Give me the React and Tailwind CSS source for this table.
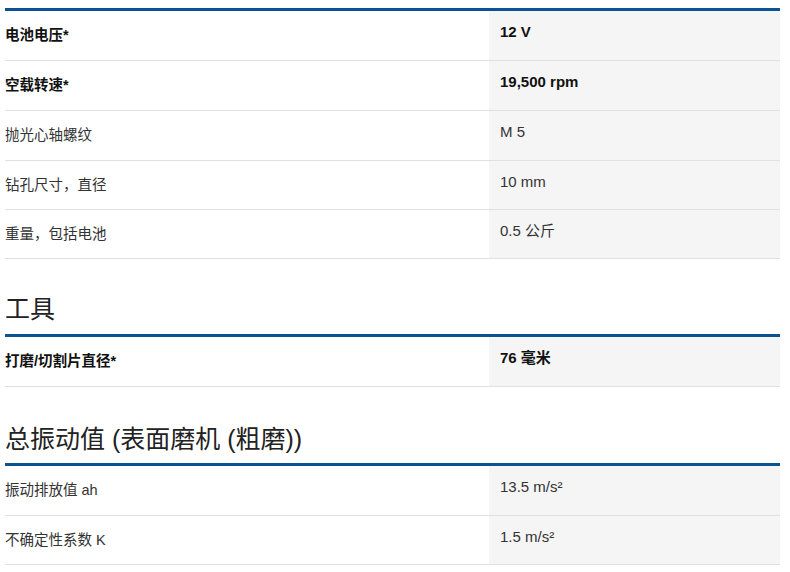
import React from 'react';

const font = { fontFamily: '"Liberation Sans", "Noto Sans CJK SC", sans-serif' };

function Row({ label, value, bold, h }) {
  return (
    <div className={`flex border-b border-[#e0e0e0] ${h}`}>
      <div className={`w-[484px] flex items-center pt-[1px] text-[14.5px] ${bold ? 'font-bold text-[#111]' : 'text-[#333]'}`}>
        {label}
      </div>
      <div className={`flex-1 bg-[#f5f5f5] pl-[11px] pt-[11px] text-[15px] leading-[20px] ${bold ? 'font-bold text-[#111]' : 'text-[#333]'}`}>
        {value}
      </div>
    </div>
  );
}

export default function App() {
  return (
    <div className="w-[790px] h-[572px] bg-white overflow-hidden pl-[5px] pr-[10px] pt-[8px]" style={font}>
      <div className="border-t-[3px] border-[#0a5291]">
        <Row label="电池电压*" value="12 V" bold h="h-[50px]" />
        <Row label="空载转速*" value="19,500 rpm" bold h="h-[50px]" />
        <Row label="抛光心轴螺纹" value="M 5" h="h-[50px]" />
        <Row label="钻孔尺寸，直径" value="10 mm" h="h-[49px]" />
        <Row label="重量，包括电池" value="0.5 公斤" h="h-[49px]" />
      </div>

      <div className="h-[75px] pt-[35px] text-[25px] leading-[30px] text-[#222]">工具</div>
      <div className="border-t-[3px] border-[#0a5291]">
        <Row label="打磨/切割片直径*" value="76 毫米" bold h="h-[50px]" />
      </div>

      <div className="h-[76px] pt-[37px] text-[25px] leading-[30px] text-[#222]">总振动值 (表面磨机 (粗磨))</div>
      <div className="border-t-[3px] border-[#0a5291]">
        <Row label="振动排放值 ah" value="13.5 m/s²" h="h-[50px]" />
        <Row label="不确定性系数 K" value="1.5 m/s²" h="h-[49px]" />
      </div>
    </div>
  );
}
